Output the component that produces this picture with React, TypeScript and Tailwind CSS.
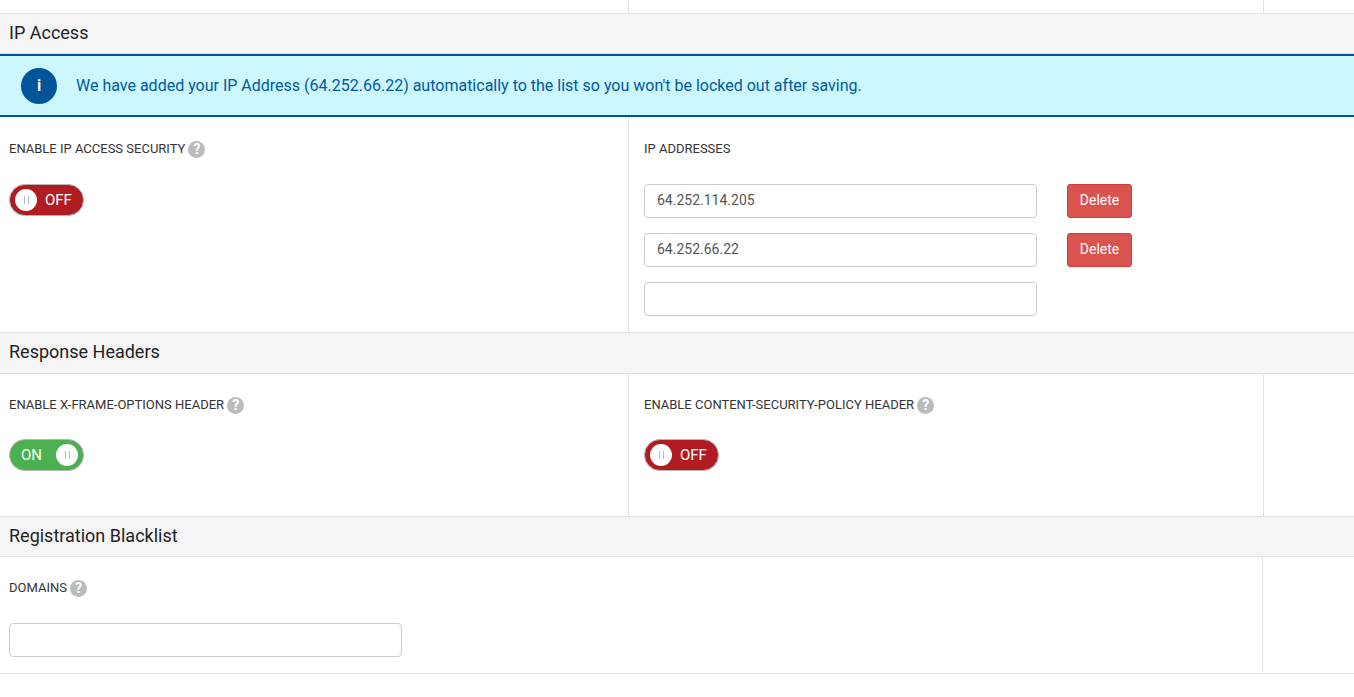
const FONT = "font-['Roboto',sans-serif]";

function SectionHeader({ title, className = "" }: { title: string; className?: string }) {
  return (
    <div className={`flex items-center bg-[#f5f5f5] border-b border-[#e0e0e0] pl-[9px] text-[18px] text-[#222] ${className}`}>
      {title}
    </div>
  );
}

function Label({ text, help = true }: { text: string; help?: boolean }) {
  return (
    <div className="flex h-[18px] items-center text-[13px] text-[#333]">
      <span>{text}</span>
      {help ? (
        <span className="ml-[3px] flex h-[17px] w-[17px] items-center justify-center rounded-full bg-[#bbbbbb] text-[14px] font-bold text-white">
          ?
        </span>
      ) : null}
    </div>
  );
}

function Toggle({ on }: { on: boolean }) {
  const knob = (
    <span className="flex h-[22px] w-[22px] items-center justify-center gap-[3px] rounded-full bg-white">
      <span className="h-[8px] w-px bg-[#bbb]" />
      <span className="h-[8px] w-px bg-[#bbb]" />
    </span>
  );
  return (
    <div
      className={`flex h-[32px] w-[75px] items-center rounded-full border border-[#b5b5b5] text-[15px] text-white ${
        on ? "justify-between bg-[#4caf50] pl-[11px] pr-[5px]" : "bg-[#b01c22] pl-[5px]"
      }`}
    >
      {on ? <span>ON</span> : knob}
      {on ? knob : <span className="ml-[8px]">OFF</span>}
    </div>
  );
}

function TextBox({ value = "", className = "w-[393px]" }: { value?: string; className?: string }) {
  return (
    <input
      readOnly
      value={value}
      className={`h-[34px] rounded-[4px] border border-[#cccccc] bg-white px-[12px] pb-[2px] text-[14px] text-[#555] ${className}`}
    />
  );
}

function DeleteButton() {
  return (
    <button className="ml-[30px] h-[34px] w-[65px] rounded-[3px] border border-[#d43f3a] bg-[#d9534f] pb-[2px] text-[14px] text-white">
      Delete
    </button>
  );
}

export default function App() {
  return (
    <div className={`${FONT} h-[697px] w-[1354px] overflow-hidden bg-white`}>
      <div className="flex h-[14px] border-b border-[#e0e0e0]">
        <div className="w-[629px] border-r border-[#e0e0e0]" />
        <div className="w-[635px] border-r border-[#e0e0e0]" />
      </div>

      <SectionHeader title="IP Access" className="h-[40px] pb-[2px]" />
      <div className="flex h-[63px] items-center border-y-2 border-[#00549a] bg-[#ccf7ff] pl-[21px]">
        <span className="flex h-[36px] w-[36px] items-center justify-center rounded-full bg-[#00549a] text-[16px] font-bold text-white">
          i
        </span>
        <span className="ml-[19px] text-[16px] text-[#005a9e]">
          We have added your IP Address (64.252.66.22) automatically to the list so you won't be locked out after saving.
        </span>
      </div>

      <div className="flex h-[216px] border-b border-[#e0e0e0]">
        <div className="w-[629px] border-r border-[#e0e0e0] pl-[9px] pt-[23px]">
          <Label text="ENABLE IP ACCESS SECURITY" />
          <div className="mt-[26px]">
            <Toggle on={false} />
          </div>
        </div>
        <div className="pl-[15px] pt-[23px]">
          <Label text="IP ADDRESSES" help={false} />
          <div className="mt-[26px] flex flex-col gap-[15px]">
            <div className="flex">
              <TextBox value="64.252.114.205" />
              <DeleteButton />
            </div>
            <div className="flex">
              <TextBox value="64.252.66.22" />
              <DeleteButton />
            </div>
            <div className="flex">
              <TextBox />
            </div>
          </div>
        </div>
      </div>

      <SectionHeader title="Response Headers" className="h-[41px] pb-[4px]" />
      <div className="flex h-[143px] border-b border-[#e0e0e0]">
        <div className="w-[629px] border-r border-[#e0e0e0] pl-[9px] pt-[22px]">
          <Label text="ENABLE X-FRAME-OPTIONS HEADER" />
          <div className="mt-[25px]">
            <Toggle on />
          </div>
        </div>
        <div className="w-[635px] border-r border-[#e0e0e0] pl-[15px] pt-[22px]">
          <Label text="ENABLE CONTENT-SECURITY-POLICY HEADER" />
          <div className="mt-[25px]">
            <Toggle on={false} />
          </div>
        </div>
      </div>

      <SectionHeader title="Registration Blacklist" className="h-[40px] pb-[2px]" />
      <div className="flex h-[117px] border-b border-[#e0e0e0]">
        <div className="mb-[1px] w-[1263px] border-r border-[#e0e0e0] pl-[9px] pt-[22px]">
          <Label text="DOMAINS" />
          <div className="mt-[26px]">
            <TextBox />
          </div>
        </div>
      </div>
    </div>
  );
}
